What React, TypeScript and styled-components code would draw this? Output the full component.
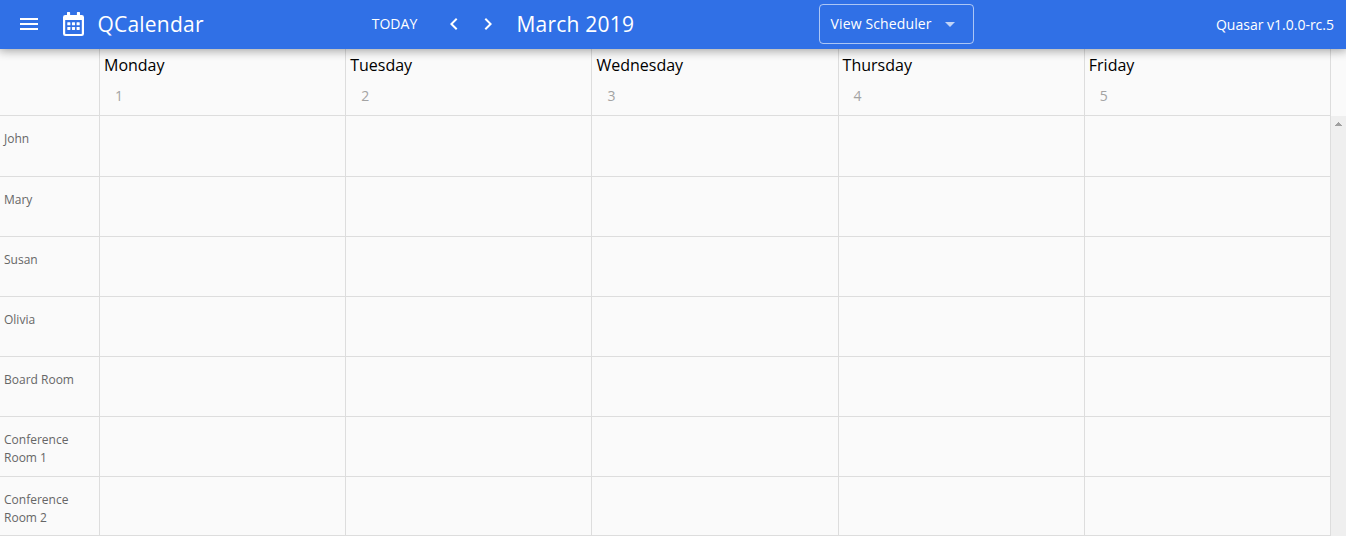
import React from "react";
import styled, { createGlobalStyle } from "styled-components";

const GlobalStyle = createGlobalStyle`
  *, *::before, *::after { box-sizing: border-box; }
  html, body { margin: 0; padding: 0; overflow: hidden; }
  body {
    background: #fafafa;
    color: #000;
    font-family: "Open Sans", "Noto Sans", sans-serif;
    font-size: 14px;
  }
`;

const line = "#dddddd";

const Page = styled.div`
  display: flex;
  flex-direction: column;
  width: 100%;
  height: 536px;
  overflow: hidden;
`;

const Toolbar = styled.header`
  position: relative;
  z-index: 1;
  flex: none;
  display: flex;
  align-items: center;
  height: 49px;
  padding: 0 12px 0 17px;
  background: #3070e6;
  color: #fff;
  box-shadow: 0 0 10px 2px rgba(0, 0, 0, 0.2), 0 0 10px rgba(0, 0, 0, 0.24);
`;

const IconButton = styled.button<{ $gap?: number }>`
  flex: none;
  display: flex;
  width: 24px;
  height: 24px;
  padding: 0;
  margin: 0 0 1px ${(p) => p.$gap ?? 0}px;
  border: 0;
  background: none;
  color: inherit;
`;

const Brand = styled.div`
  display: flex;
  align-items: center;
  width: 308px;
  margin-left: 22px;
`;

const Title = styled.h1<{ $gap: number }>`
  margin: 0 0 1px ${(p) => p.$gap}px;
  font-size: 21px;
  font-weight: 400;
  line-height: 32px;
  letter-spacing: 0.21px;
  white-space: nowrap;
`;

const TodayButton = styled.button`
  width: 47px;
  margin: 0 0 1px 0;
  padding: 0;
  border: 0;
  background: none;
  color: inherit;
  font: inherit;
  line-height: 24px;
  white-space: nowrap;
`;

const Month = styled.div`
  width: 319.5px;
`;

const Select = styled.div`
  display: flex;
  align-items: center;
  justify-content: space-between;
  width: 155px;
  height: 40px;
  margin-bottom: 1px;
  padding: 0 11px 0 10.5px;
  border: 1px solid rgba(255, 255, 255, 0.6);
  border-radius: 4px;
  white-space: nowrap;
`;

const SelectLabel = styled.span`
  padding-bottom: 1px;
  letter-spacing: 0.13px;
`;

const Version = styled.div`
  margin-left: auto;
  white-space: nowrap;
`;

const HeaderRow = styled.div`
  flex: none;
  display: flex;
  height: 67px;
`;

const HeaderDays = styled.div`
  flex: 1;
  display: flex;
  border-bottom: 1px solid ${line};
`;

const Corner = styled.div`
  width: 100px;
  border-right: 1px solid ${line};
`;

const ScrollGutter = styled.div`
  width: 15px;
`;

const DayHead = styled.div`
  flex: 1 1 0;
  padding: 4px 4px 0;
  border-right: 1px solid ${line};
`;

const Weekday = styled.div`
  font-size: 16px;
  line-height: 24px;
`;

const DayNumber = styled.div`
  margin-top: 9px;
  padding-left: 11px;
  color: #a3a3a3;
  line-height: 20px;
`;

const Body = styled.div`
  flex: 1;
  display: flex;
  min-height: 0;
`;

const Rows = styled.div`
  flex: 1;
`;

const Row = styled.div<{ $height: number }>`
  display: flex;
  height: ${(p) => p.$height}px;
  border-bottom: 1px solid ${line};
`;

const Resource = styled.div`
  width: 100px;
  padding: 14px 20px 0 4px;
  border-right: 1px solid ${line};
  color: #666;
  font-size: 12px;
  line-height: 18px;
`;

const Cell = styled.div`
  flex: 1 1 0;
  border-right: 1px solid ${line};
`;

const Scrollbar = styled.div`
  display: flex;
  justify-content: center;
  width: 15px;
  padding-top: 6px;
  background: #efefef;
`;

const CalendarGlyph = styled.svg`
  flex: none;
  margin-bottom: 1px;
`;

const Glyph = ({ d, opacity = 1 }: { d: string; opacity?: number }) => (
  <svg width="24" height="24" viewBox="0 0 24 24" fill="currentColor" opacity={opacity}>
    <path d={d} />
  </svg>
);

const CalendarIcon = () => (
  <CalendarGlyph width="21" height="24" viewBox="0 0 21 24" fill="currentColor">
    <path
      fillRule="evenodd"
      d="M4 0.6a0.6 0.6 0 0 1 .6-.6h1.9a.6.6 0 0 1 .6.6V3h6.8V.6a.6.6 0 0 1 .6-.6h1.9a.6.6 0 0 1 .6.6V3h1.7A2.3 2.3 0 0 1 21 5.300v16.400A2.300 2.300 0 0 1 18.700 24H2.300A2.300 2.300 0 0 1 0 21.700V5.300A2.300 2.300 0 0 1 2.300 3H4zM2.200 8v13.500a.4.4 0 0 0 .4.4h15.800a.4.4 0 0 0 .4-.4V8z"
    />
    {[10.3, 15].map((y) =>
      [4.3, 8.95, 13.6].map((x) => (
        <rect key={`${x}-${y}`} x={x} y={y} width="3.1" height="3" rx="0.4" />
      )),
    )}
  </CalendarGlyph>
);

const days = ["Monday", "Tuesday", "Wednesday", "Thursday", "Friday"];
const resources = [
  { name: "John", height: 61 },
  { name: "Mary", height: 60 },
  { name: "Susan", height: 60 },
  { name: "Olivia", height: 60 },
  { name: "Board Room", height: 60 },
  { name: "Conference Room 1", height: 60 },
  { name: "Conference Room 2", height: 59 },
];

export default function App() {
  return (
    <Page>
      <GlobalStyle />
      <Toolbar>
        <IconButton aria-label="Menu">
          <Glyph d="M3 18h18v-2H3v2zm0-5h18v-2H3v2zm0-7v2h18V6H3z" />
        </IconButton>
        <Brand>
          <CalendarIcon />
          <Title $gap={13.5}>QCalendar</Title>
        </Brand>
        <TodayButton>TODAY</TodayButton>
        <IconButton aria-label="Previous" $gap={24}>
          <Glyph d="M15.41 7.41L14 6l-6 6 6 6 1.41-1.41L10.83 12z" />
        </IconButton>
        <IconButton aria-label="Next" $gap={9.5}>
          <Glyph d="M10 6L8.59 7.41 13.17 12l-4.58 4.59L10 18l6-6z" />
        </IconButton>
        <Month>
          <Title $gap={17}>March 2019</Title>
        </Month>
        <Select>
          <SelectLabel>View Scheduler</SelectLabel>
          <Glyph d="M7 10l5 5 5-5z" opacity={0.7} />
        </Select>
        <Version>Quasar v1.0.0-rc.5</Version>
      </Toolbar>
      <HeaderRow>
        <HeaderDays>
          <Corner />
          {days.map((day, i) => (
            <DayHead key={day}>
              <Weekday>{day}</Weekday>
              <DayNumber>{i + 1}</DayNumber>
            </DayHead>
          ))}
        </HeaderDays>
        <ScrollGutter />
      </HeaderRow>
      <Body>
        <Rows>
          {resources.map((r) => (
            <Row key={r.name} $height={r.height}>
              <Resource>{r.name}</Resource>
              {days.map((day) => (
                <Cell key={day} />
              ))}
            </Row>
          ))}
        </Rows>
        <Scrollbar>
          <svg width="7" height="4" viewBox="0 0 7 4" fill="#a0a0a0" shapeRendering="crispEdges">
            <path d="M3 0h1v1h1v1h1v1h1v1H0V3h1V2h1V1h1z" />
          </svg>
        </Scrollbar>
      </Body>
    </Page>
  );
}
